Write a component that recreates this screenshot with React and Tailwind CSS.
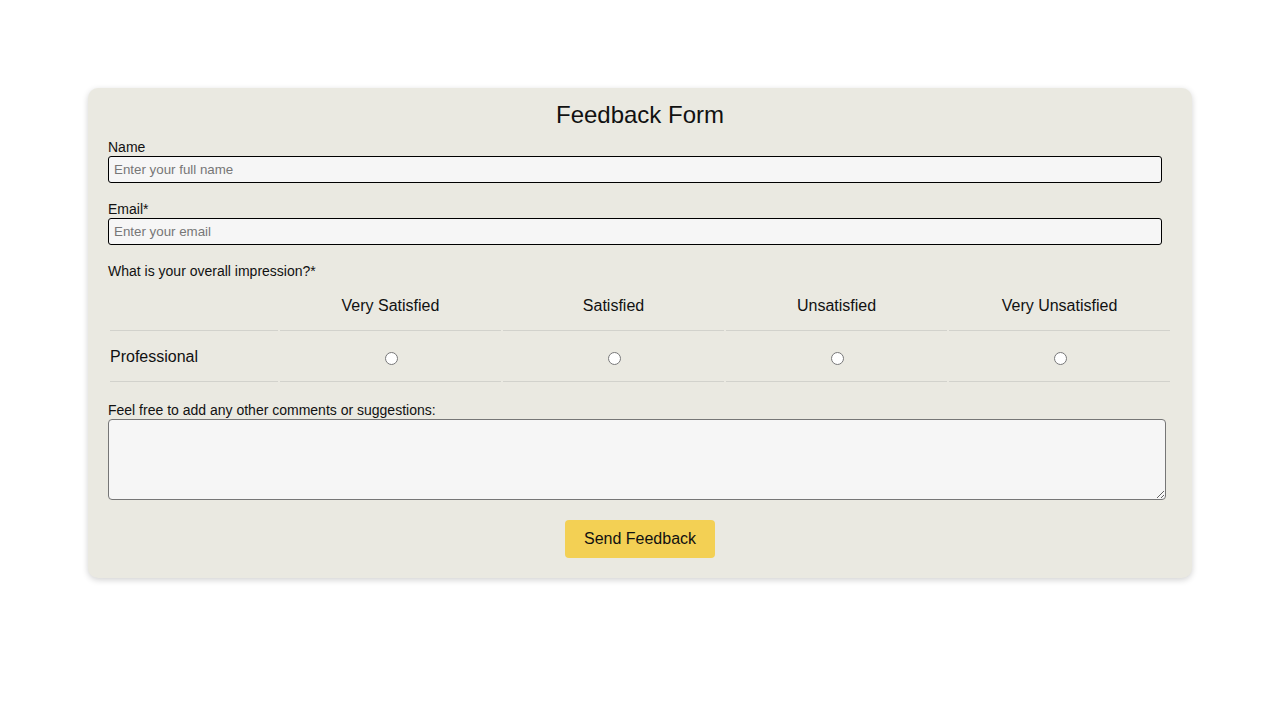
const RATINGS = ["Very Satisfied", "Satisfied", "Unsatisfied", "Very Unsatisfied"]

export default function App() {
  return (
    <div className="min-h-screen bg-white pt-[88px] font-['Liberation_Sans',Arial,sans-serif] text-[#111]">
      <form className="mx-auto w-[1104px] rounded-[10px] bg-[#eae9e1] px-5 pb-5 pt-[13px] shadow-[0_2px_6px_rgba(0,0,0,0.18)]">
        <h1 className="text-center text-[24px] leading-[28px]">Feedback Form</h1>

        <label className="mt-[10px] block text-[14px] leading-[16px]">Name</label>
        <input
          type="text"
          placeholder="Enter your full name"
          className="mt-px block h-[27px] w-[1054px] rounded-[3px] border border-black bg-[#f6f6f6] px-[5px] text-[13.33px] placeholder:text-[#777] outline-none"
        />

        <label className="mt-[18px] block text-[14px] leading-[16px]">Email*</label>
        <input
          type="email"
          placeholder="Enter your email"
          className="mt-px block h-[27px] w-[1054px] rounded-[3px] border border-black bg-[#f6f6f6] px-[5px] text-[13.33px] placeholder:text-[#777] outline-none"
        />

        <p className="mt-[18px] text-[14px] leading-[16px]">What is your overall impression?*</p>

        <table className="mt-px w-[1064px] table-fixed border-separate border-spacing-[2px] text-[16px]">
          <thead>
            <tr>
              <th className="h-[49px] w-[168px] border-b border-[#d2d2cc]"></th>
              {RATINGS.map((r) => (
                <th key={r} className="h-[49px] border-b border-[#d2d2cc] font-normal">
                  {r}
                </th>
              ))}
            </tr>
          </thead>
          <tbody>
            <tr>
              <td className="h-[49px] border-b border-[#d2d2cc] text-left">Professional</td>
              {RATINGS.map((r) => (
                <td key={r} className="h-[49px] border-b border-[#d2d2cc] pt-[2px] pl-[2px] text-center">
                  <input type="radio" name="professional" className="h-[13px] w-[13px] align-middle" />
                </td>
              ))}
            </tr>
          </tbody>
        </table>

        <label className="mt-[18px] block text-[14px] leading-[16px]">
          Feel free to add any other comments or suggestions:
        </label>
        <textarea className="mt-px block h-[81px] w-[1058px] rounded-[4px] border border-[#767676] bg-[#f6f6f6] outline-none" />

        <div className="mt-5 flex justify-center">
          <button
            type="button"
            className="h-[38px] w-[150px] rounded-[4px] bg-[#f3d054] text-[16px] text-[#111]"
          >
            Send Feedback
          </button>
        </div>
      </form>
    </div>
  )
}
